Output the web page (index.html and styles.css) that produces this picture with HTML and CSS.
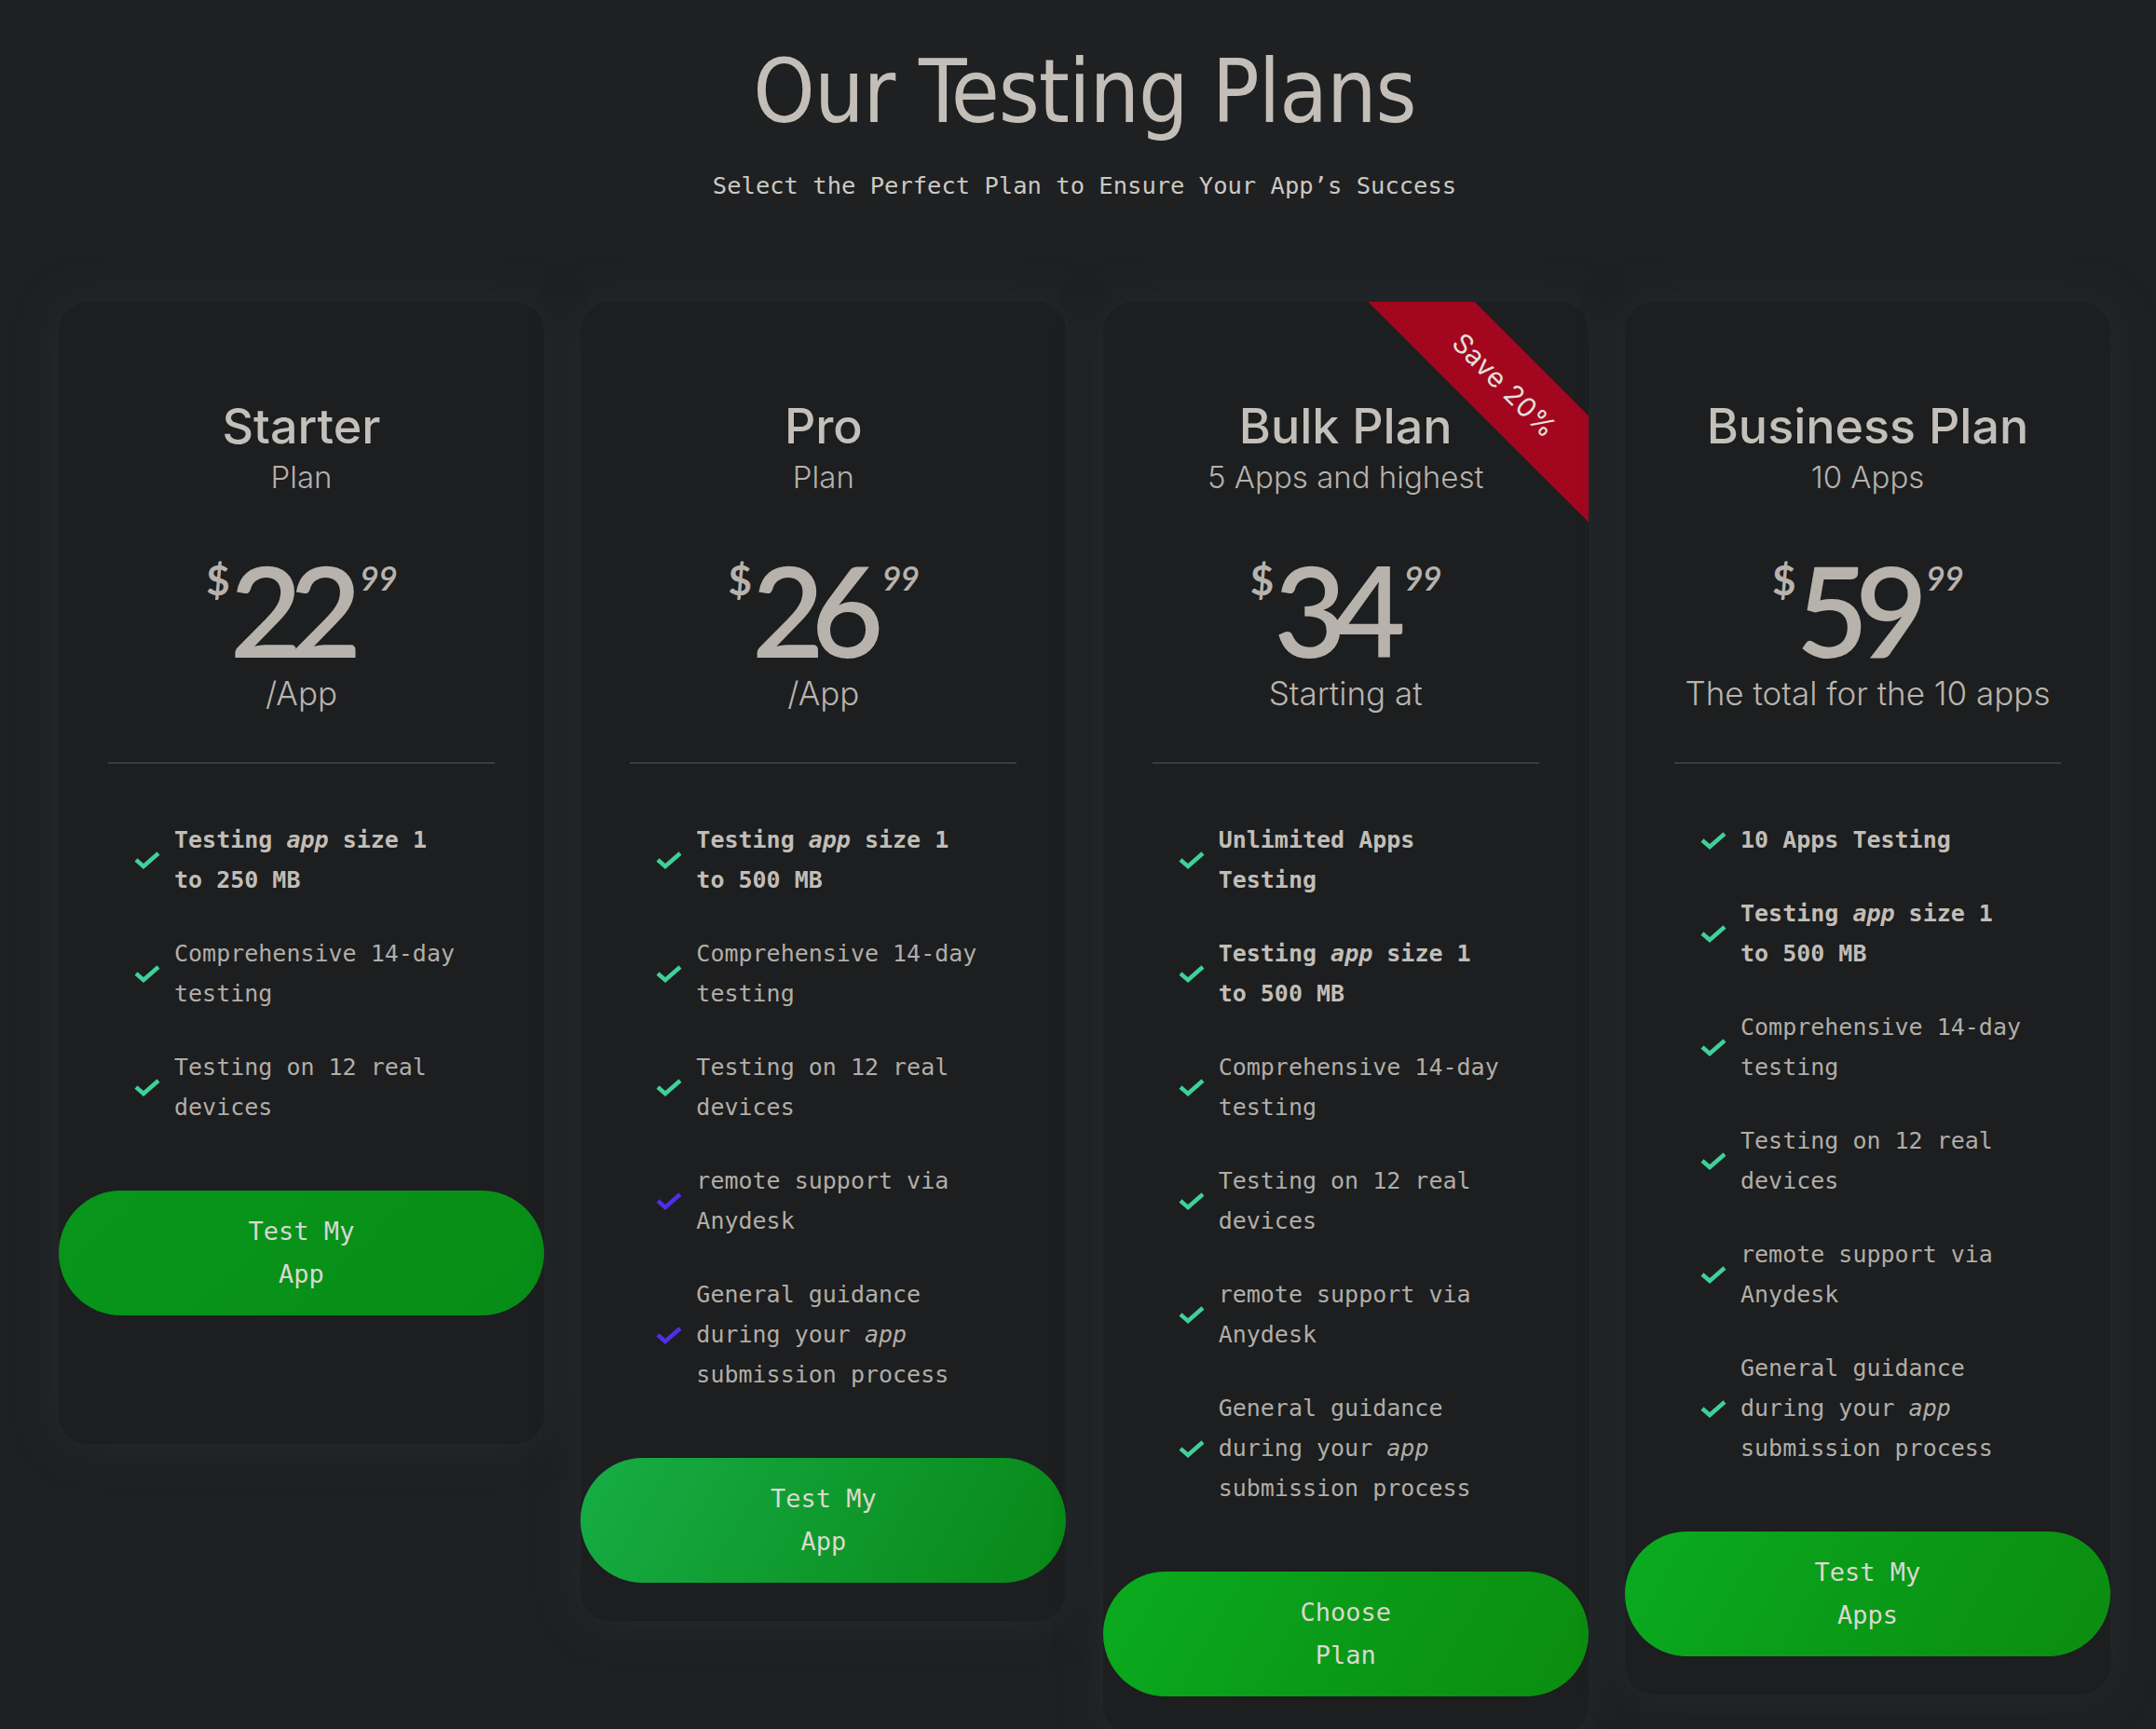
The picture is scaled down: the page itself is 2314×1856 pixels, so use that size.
FILE: index.html
```html
<!DOCTYPE html>
<html lang="en">
<head>
<meta charset="utf-8">
<title>Our Testing Plans</title>
<link rel="stylesheet" href="styles.css">
</head>
<body>
<main class="page">
  <header class="intro">
    <h1 class="intro-title">Our Testing Plans</h1>
    <p class="intro-sub">Select the Perfect Plan to Ensure Your App’s Success</p>
  </header>

  <section class="plans">
    <article class="card">
      <div class="card-head">
        <h2 class="plan-name">Starter</h2>
        <p class="plan-sub">Plan</p>
        <div class="price"><span class="cur">$</span><span class="amt">22</span><span class="cents">99</span></div>
        <p class="per">/App</p>
      </div>
      <hr class="divider">
      <ul class="features">
        <li class="strong"><svg class="check" viewBox="0 0 30 22"><polyline points="3,11 11,18 27,4"/></svg><span class="ft">Testing <em>app</em> size 1 to 250 MB</span></li>
        <li><svg class="check" viewBox="0 0 30 22"><polyline points="3,11 11,18 27,4"/></svg><span class="ft">Comprehensive 14-day testing</span></li>
        <li><svg class="check" viewBox="0 0 30 22"><polyline points="3,11 11,18 27,4"/></svg><span class="ft">Testing on 12 real devices</span></li>
      </ul>
      <a class="btn btn-flat" href="#"><span class="btn-label">Test My App</span></a>
    </article>

    <article class="card">
      <div class="card-head">
        <h2 class="plan-name">Pro</h2>
        <p class="plan-sub">Plan</p>
        <div class="price"><span class="cur">$</span><span class="amt">26</span><span class="cents">99</span></div>
        <p class="per">/App</p>
      </div>
      <hr class="divider">
      <ul class="features">
        <li class="strong"><svg class="check" viewBox="0 0 30 22"><polyline points="3,11 11,18 27,4"/></svg><span class="ft">Testing <em>app</em> size 1 to 500 MB</span></li>
        <li><svg class="check" viewBox="0 0 30 22"><polyline points="3,11 11,18 27,4"/></svg><span class="ft">Comprehensive 14-day testing</span></li>
        <li><svg class="check" viewBox="0 0 30 22"><polyline points="3,11 11,18 27,4"/></svg><span class="ft">Testing on 12 real devices</span></li>
        <li class="alt"><svg class="check" viewBox="0 0 30 22"><polyline points="3,11 11,18 27,4"/></svg><span class="ft">remote support via Anydesk</span></li>
        <li class="alt"><svg class="check" viewBox="0 0 30 22"><polyline points="3,11 11,18 27,4"/></svg><span class="ft">General guidance during your <em>app</em> submission process</span></li>
      </ul>
      <a class="btn btn-soft" href="#"><span class="btn-label">Test My App</span></a>
    </article>

    <article class="card card-ribbon">
      <div class="ribbon">Save 20%</div>
      <div class="card-head">
        <h2 class="plan-name">Bulk Plan</h2>
        <p class="plan-sub">5 Apps and highest</p>
        <div class="price"><span class="cur">$</span><span class="amt">34</span><span class="cents">99</span></div>
        <p class="per">Starting at</p>
      </div>
      <hr class="divider">
      <ul class="features">
        <li class="strong"><svg class="check" viewBox="0 0 30 22"><polyline points="3,11 11,18 27,4"/></svg><span class="ft">Unlimited Apps Testing</span></li>
        <li class="strong"><svg class="check" viewBox="0 0 30 22"><polyline points="3,11 11,18 27,4"/></svg><span class="ft">Testing <em>app</em> size 1 to 500 MB</span></li>
        <li><svg class="check" viewBox="0 0 30 22"><polyline points="3,11 11,18 27,4"/></svg><span class="ft">Comprehensive 14-day testing</span></li>
        <li><svg class="check" viewBox="0 0 30 22"><polyline points="3,11 11,18 27,4"/></svg><span class="ft">Testing on 12 real devices</span></li>
        <li><svg class="check" viewBox="0 0 30 22"><polyline points="3,11 11,18 27,4"/></svg><span class="ft">remote support via Anydesk</span></li>
        <li><svg class="check" viewBox="0 0 30 22"><polyline points="3,11 11,18 27,4"/></svg><span class="ft">General guidance during your <em>app</em> submission process</span></li>
      </ul>
      <a class="btn btn-bright" href="#"><span class="btn-label">Choose Plan</span></a>
    </article>

    <article class="card">
      <div class="card-head">
        <h2 class="plan-name">Business Plan</h2>
        <p class="plan-sub">10 Apps</p>
        <div class="price"><span class="cur">$</span><span class="amt">59</span><span class="cents">99</span></div>
        <p class="per">The total for the 10 apps</p>
      </div>
      <hr class="divider">
      <ul class="features">
        <li class="strong"><svg class="check" viewBox="0 0 30 22"><polyline points="3,11 11,18 27,4"/></svg><span class="ft">10 Apps Testing</span></li>
        <li class="strong"><svg class="check" viewBox="0 0 30 22"><polyline points="3,11 11,18 27,4"/></svg><span class="ft">Testing <em>app</em> size 1 to 500 MB</span></li>
        <li><svg class="check" viewBox="0 0 30 22"><polyline points="3,11 11,18 27,4"/></svg><span class="ft">Comprehensive 14-day testing</span></li>
        <li><svg class="check" viewBox="0 0 30 22"><polyline points="3,11 11,18 27,4"/></svg><span class="ft">Testing on 12 real devices</span></li>
        <li><svg class="check" viewBox="0 0 30 22"><polyline points="3,11 11,18 27,4"/></svg><span class="ft">remote support via Anydesk</span></li>
        <li><svg class="check" viewBox="0 0 30 22"><polyline points="3,11 11,18 27,4"/></svg><span class="ft">General guidance during your <em>app</em> submission process</span></li>
      </ul>
      <a class="btn btn-bright" href="#"><span class="btn-label">Test My Apps</span></a>
    </article>
  </section>
</main>
</body>
</html>
```

FILE: styles.css
```css
* { box-sizing: border-box; }

html, body {
  margin: 0;
  padding: 0;
  background: #1e2022;
}

body {
  font-family: "Inter", "Noto Sans", sans-serif;
  color: #b9b4ae;
  min-height: 1856px;
}

.page {
  width: 2202px;
  margin-left: 63px;
}

.intro {
  text-align: center;
  padding-top: 44px;
}

.intro-title {
  margin: 0;
  font-family: "DejaVu Sans Condensed", "DejaVu Sans", sans-serif;
  font-stretch: condensed;
  font-weight: 400;
  font-size: 94px;
  line-height: 110px;
  color: #c3beb8;
  letter-spacing: -1px;
}

.intro-sub {
  margin: 27px 0 0;
  font-family: "DejaVu Sans Mono", "Liberation Mono", monospace;
  font-size: 25.5px;
  line-height: 36px;
  color: #cdc8c1;
}

.plans {
  margin-top: 107px;
  display: grid;
  grid-template-columns: repeat(4, 521px);
  column-gap: 39.33px;
  align-items: start;
}

.card {
  position: relative;
  overflow: hidden;
  background: #1c1e20;
  border-radius: 32px;
  box-shadow: 0 0 40px 6px rgba(36, 42, 44, 0.9);
  min-height: 1226px;
  padding-bottom: 41px;
  display: flex;
  flex-direction: column;
}

.card-head {
  padding-top: 104px;
  text-align: center;
}

.plan-name {
  margin: 0;
  font-family: "Inter", sans-serif;
  font-weight: 500;
  font-size: 52px;
  line-height: 60px;
  color: #c4bfb9;
}

.plan-sub {
  margin: 4px 0 0;
  font-weight: 300;
  font-size: 33px;
  line-height: 40px;
  color: #b6b1ab;
}

.price {
  margin-top: 56px;
  height: 134px;
  display: flex;
  justify-content: center;
  align-items: flex-start;
  color: #b8b2ac;
  font-family: "Lato", "Open Sans", sans-serif;
}

.cur {
  font-weight: 700;
  font-size: 44px;
  line-height: 44px;
  margin-top: 12px;
  margin-right: 0;
}

.amt {
  font-weight: 600;
  font-size: 134px;
  line-height: 134px;
  letter-spacing: -14px;
  margin-right: 12px;
}

.cents {
  font-style: italic;
  font-weight: 600;
  font-size: 36px;
  line-height: 36px;
  margin-top: 14px;
  letter-spacing: -1px;
}

.per {
  margin: 2px 0 0;
  font-weight: 300;
  font-size: 35px;
  line-height: 40px;
  color: #b9b4ae;
}

.divider {
  margin: 54px 53px 0;
  height: 2px;
  border: 0;
  background: #393c3f;
}

.features {
  list-style: none;
  margin: 60px 0 0;
  padding: 0 0 0 80px;
  display: flex;
  flex-direction: column;
  gap: 36px;
}

.features li {
  display: flex;
  align-items: center;
  gap: 14px;
  font-family: "DejaVu Sans Mono", "Liberation Mono", monospace;
  font-size: 25px;
  line-height: 43px;
  color: #b2ada6;
}

.features li.strong {
  font-weight: 700;
  color: #c2bdb6;
}

.ft {
  width: 310px;
}

.ft em {
  font-style: italic;
}

.check {
  flex: none;
  width: 30px;
  height: 22px;
  fill: none;
  stroke: #3fd197;
  stroke-width: 4.5;
}

.features li.alt .check {
  stroke: #4f2fe6;
}

.btn {
  margin-top: 68px;
  display: flex;
  align-items: center;
  justify-content: center;
  height: 134px;
  border-radius: 67px;
  text-decoration: none;
  color: #dcd8d0;
  font-family: "DejaVu Sans Mono", "Liberation Mono", monospace;
  font-size: 27px;
  line-height: 46px;
  text-align: center;
}

.btn-label {
  display: block;
  max-width: 9.5ch;
}

.btn-flat {
  background: linear-gradient(135deg, #08961b, #078d17);
}

.btn-soft {
  background: linear-gradient(120deg, #17ad46 0%, #0f9a2e 50%, #088716 100%);
}

.btn-bright {
  background: linear-gradient(120deg, #0aac1f 0%, #0a9a18 50%, #0c8d10 100%);
}

.ribbon {
  position: absolute;
  top: 49px;
  right: -110px;
  width: 400px;
  height: 81px;
  transform: rotate(45deg);
  background: #a2071f;
  color: #e4e0dc;
  font-family: "Inter", sans-serif;
  font-size: 29px;
  line-height: 81px;
  text-align: center;
  letter-spacing: 0.5px;
}
```
